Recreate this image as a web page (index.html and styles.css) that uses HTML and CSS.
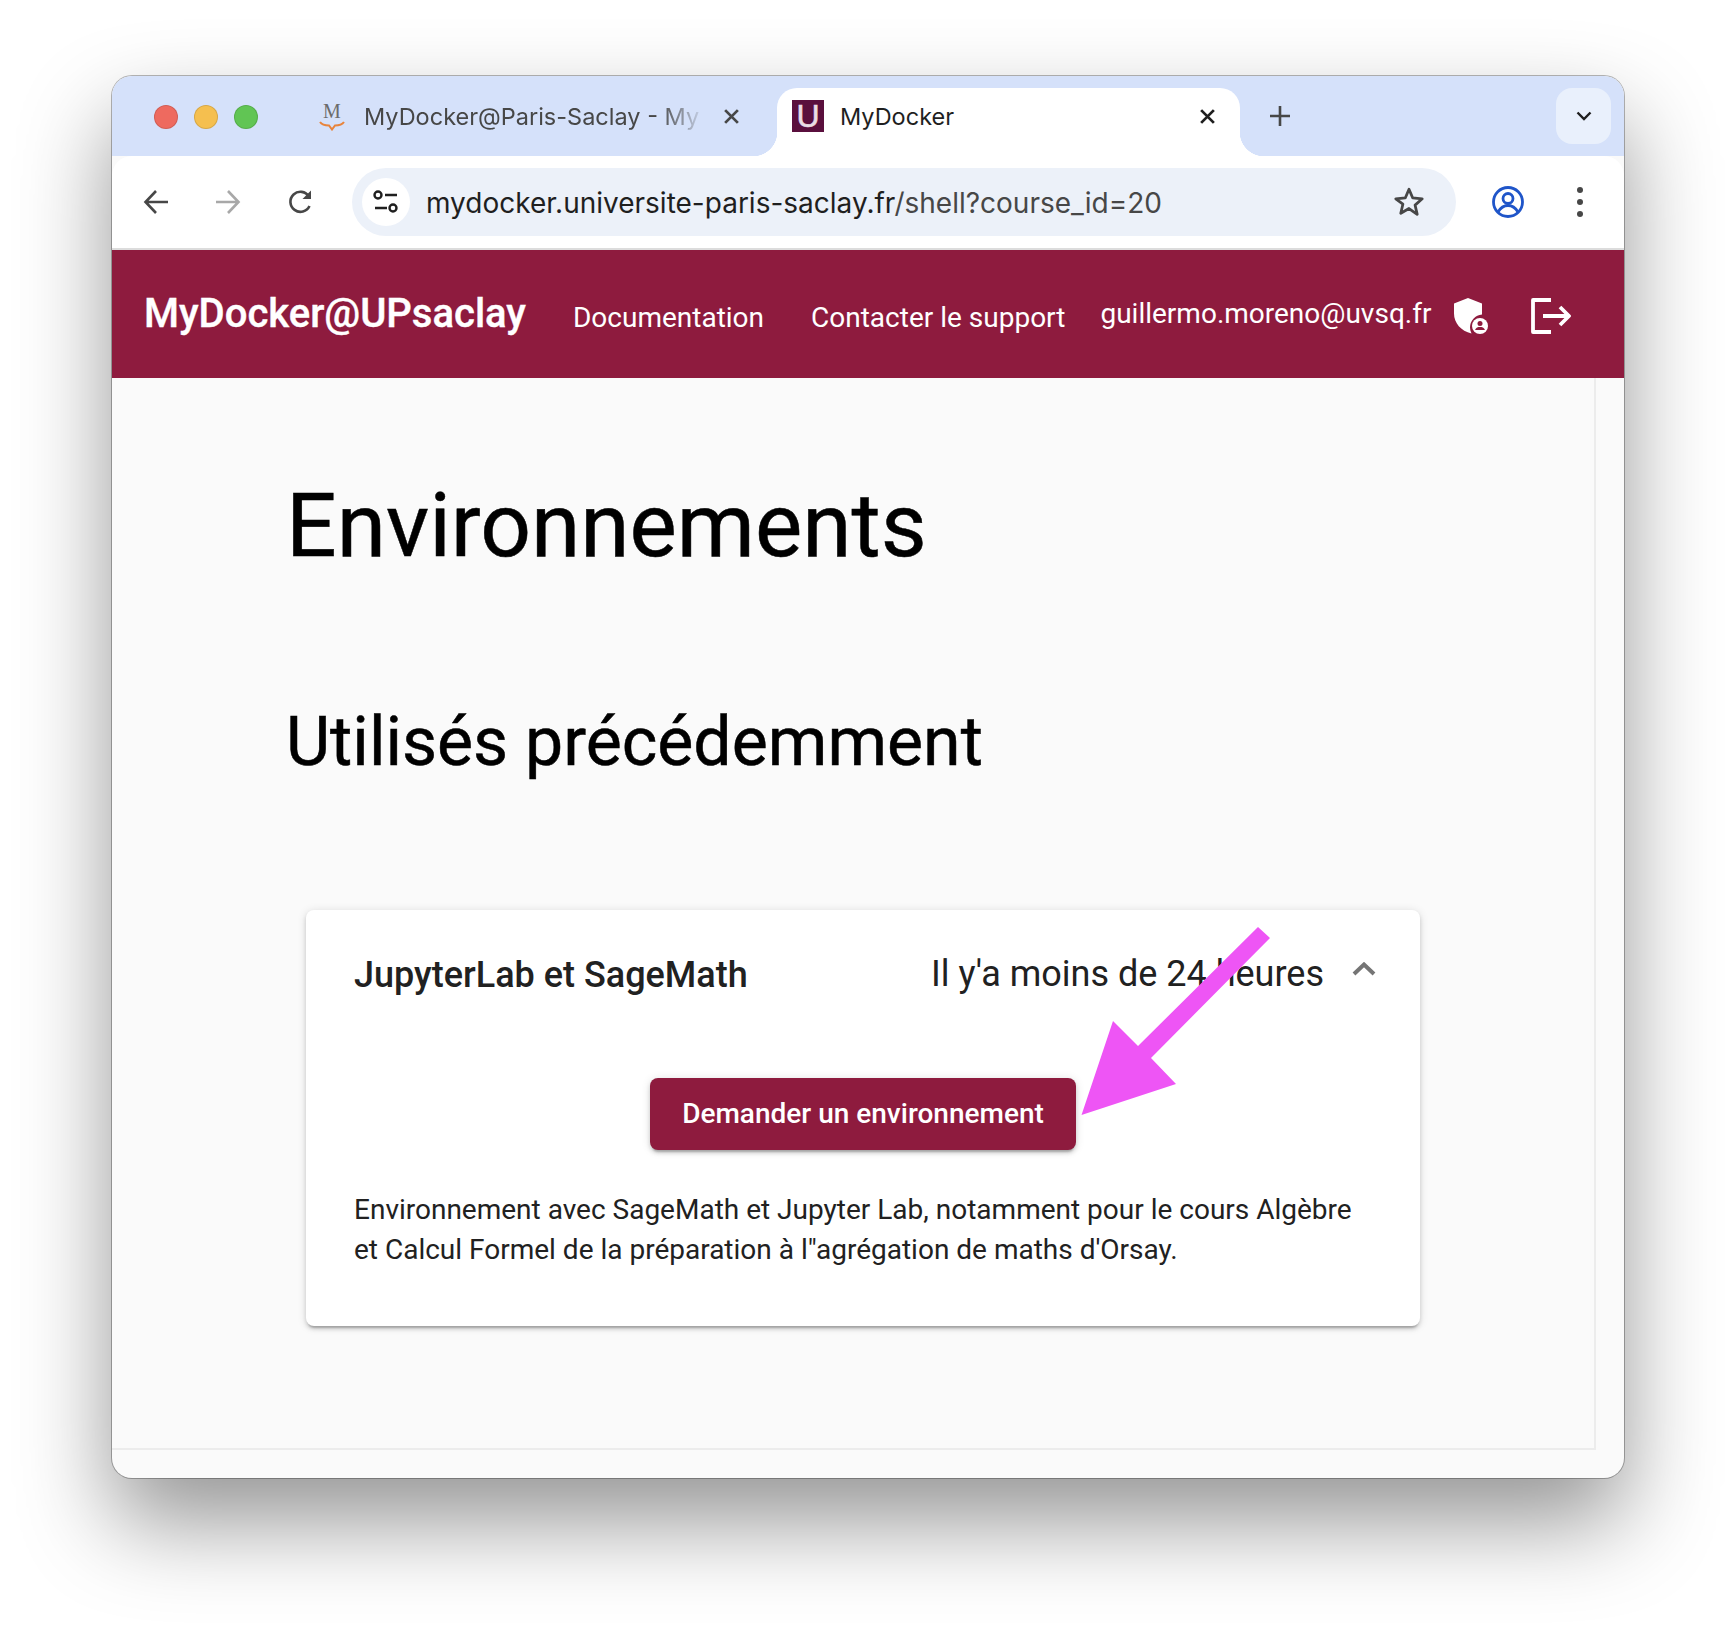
FILE: index.html
```html
<!DOCTYPE html>
<html lang="fr">

<head>
    <meta charset="UTF-8">
    <meta name="viewport" content="width=device-width, initial-scale=1.0">
    <title>MyDocker</title>
    <link rel="stylesheet" href="styles.css">
</head>

<body>

    <div class="window">
        <!-- Tab strip -->
        <div class="tabstrip">
            <div class="traffic">
                <span class="light light-red"></span>
                <span class="light light-yellow"></span>
                <span class="light light-green"></span>
            </div>
            <div class="tab">
                <span class="favicon-moodle">M
                    <svg class="moodle-hat" viewBox="0 0 26 10"><path d="M1 1c2 3 5 3.500 9 3.500l3 4 3-4c4 0 7-.5 9-3.500" fill="none" stroke="#e8843c" stroke-width="2"/></svg>
                </span>
                <span class="tab-title tab-title-fade">MyDocker@Paris-Saclay - My</span>
                <svg class="tab-close" viewBox="0 0 16 16"><path d="M2 2l12 12M14 2L2 14" stroke="#474747" stroke-width="2.600"/></svg>
            </div>
            <div class="tab tab-active">
                <span class="favicon-u">U</span>
                <span class="tab-title">MyDocker</span>
                <svg class="tab-close" viewBox="0 0 16 16"><path d="M2 2l12 12M14 2L2 14" stroke="#1f1f1f" stroke-width="2.600"/></svg>
            </div>
            <svg class="new-tab" viewBox="0 0 20 20"><path d="M10 0v20M0 10h20" stroke="#474747" stroke-width="2.600"/></svg>
            <div class="tab-search">
                <svg viewBox="0 0 16 10" width="16" height="10"><path d="M1.500 1.500L8 8l6.500-6.500" fill="none" stroke="#1f1f1f" stroke-width="2.400"/></svg>
            </div>
        </div>

        <!-- Toolbar -->
        <div class="toolbar">
            <button class="tool-btn">
                <svg viewBox="0 0 26 26" width="26" height="26"><path d="M25 13H3M13 2L2.500 13 13 24" fill="none" stroke="#474747" stroke-width="2.600"/></svg>
            </button>
            <button class="tool-btn">
                <svg viewBox="0 0 26 26" width="26" height="26"><path d="M1 13h22M13 2l10.500 11L13 24" fill="none" stroke="#a8a8a8" stroke-width="2.600"/></svg>
            </button>
            <button class="tool-btn">
                <svg viewBox="-1 0 26 26" width="26" height="26"><path d="M21.500 17a10 10 0 1 1-.6-9.500" fill="none" stroke="#474747" stroke-width="2.600"/><path d="M23 1.500v8.500h-8.500z" fill="#474747"/></svg>
            </button>
            <div class="omnibox">
                <span class="site-info">
                    <svg viewBox="0 0 26 24" width="26" height="24"><g fill="none" stroke="#1f1f1f" stroke-width="2.400"><circle cx="5" cy="5" r="3.500"/><path d="M12 5h12M2 18h12"/><circle cx="20" cy="18" r="3.500"/></g></svg>
                </span>
                <span class="url">mydocker.universite-paris-saclay.fr<span class="url-path">/shell?course_id=20</span></span>
                <svg class="star" viewBox="0 0 30 30" width="32" height="32"><path d="M15 3l3.500 8.200 8.900.8-6.700 5.900 2 8.700L15 21.100l-7.700 4.500 2-8.700L2.600 12l8.900-.8z" fill="none" stroke="#474747" stroke-width="2.600" stroke-linejoin="round"/></svg>
            </div>
            <button class="tool-btn tool-btn-first">
                <svg viewBox="0 0 34 34" width="34" height="34"><g fill="none" stroke="#1f55c9" stroke-width="2.800"><circle cx="17" cy="17" r="14.500"/><circle cx="17" cy="13.500" r="5"/><path d="M7 27c3-5 6.500-6.500 10-6.500s7 1.500 10 6.500"/></g></svg>
            </button>
            <button class="tool-btn">
                <svg viewBox="0 0 6 30" width="6" height="30"><g fill="#474747"><circle cx="3" cy="3" r="3"/><circle cx="3" cy="15" r="3"/><circle cx="3" cy="27" r="3"/></g></svg>
            </button>
        </div>

        <!-- App header -->
        <header class="app-bar">
            <div class="brand">MyDocker@UPsaclay</div>
            <a class="nav-link">Documentation</a>
            <a class="nav-link">Contacter le support</a>
            <span class="user-mail">guillermo.moreno@uvsq.fr</span>
            <svg class="shield" viewBox="0 0 36 38" width="36" height="38"><path d="M15 1L29 6.500v11a13 13 0 0 0-12 13c0 2 .5 4 1.500 6C8 34 1 26 1 16.500V6.500z" fill="#fff"/><circle cx="27" cy="29" r="8" fill="#fff"/><circle cx="27" cy="26.500" r="2.500" fill="#8e1b3e"/><path d="M22 33c1-2.500 3-3 5-3s4 .5 5 3z" fill="#8e1b3e"/></svg>
            <svg class="logout" viewBox="0 0 40 36" width="40" height="36"><path d="M20 2H2v32h18M12 18h24M29 9l9 9-9 9" fill="none" stroke="#fff" stroke-width="3.800" stroke-linejoin="round"/></svg>
        </header>

        <!-- Page content -->
        <main class="content">
            <h1 class="page-title">Environnements</h1>
            <h2 class="section-title">Utilisés précédemment</h2>

            <div class="card">
                <div class="card-head">
                    <span class="card-name">JupyterLab et SageMath</span>
                    <span class="card-date">Il y'a moins de 24 heures</span>
                    <svg class="chevron" viewBox="0 0 24 14" width="24" height="14"><path d="M2 12L12 2.500 22 12" fill="none" stroke="#757575" stroke-width="4"/></svg>
                </div>
                <div class="card-action">
                    <button class="btn">Demander un environnement</button>
                </div>
                <p class="card-text">Environnement avec SageMath et Jupyter Lab, notamment pour le cours Algèbre et Calcul Formel de la préparation à l"agrégation de maths d'Orsay.</p>
            </div>
        </main>
        <div class="bottom-gap"></div>

        <!-- Annotation over the screenshot -->
        <svg class="arrow" viewBox="0 0 200 200" width="200" height="200"><polygon points="177,7 189,18 70,138 95,164 0.500,195 32,101 57,126" fill="#ee55f5"/></svg>
    </div>

</body>

</html>
```

FILE: styles.css
```css
/* Global Styles */
* {
    box-sizing: border-box;
}

body {
    margin: 0;
    padding: 76px 112px 148px;
    background-color: #fff;
    font-family: Roboto, Arial, sans-serif;
}

.window {
    position: relative;
    display: flex;
    flex-direction: column;
    width: 1512px;
    height: 1402px;
    border-radius: 20px;
    background-color: #fafafa;
    box-shadow: 0 0 0 1px rgba(0, 0, 0, 0.28), 0 44px 92px rgba(0, 0, 0, 0.42);
}

/* Tab strip */
.tabstrip {
    display: flex;
    align-items: flex-start;
    height: 80px;
    padding-top: 12px;
    border-radius: 20px 20px 0 0;
    background-color: #d5e1fa;
}

.traffic {
    display: flex;
    gap: 16px;
    padding: 17px 0 0 42px;
}

.light {
    width: 24px;
    height: 24px;
    border-radius: 50%;
    border: 1px solid rgba(0, 0, 0, 0.12);
}

.light-red {
    background-color: #ee6a5f;
}

.light-yellow {
    background-color: #f5bf4f;
}

.light-green {
    background-color: #61c554;
}

.tab {
    position: relative;
    display: flex;
    align-items: center;
    width: 519px;
    height: 56px;
    padding-left: 60px;
    font-family: Inter, Arial, sans-serif;
    font-size: 23.500px;
    color: #474747;
}

.favicon-moodle {
    position: relative;
    width: 28px;
    height: 32px;
    flex: none;
    font-family: "Liberation Serif", serif;
    font-size: 20px;
    line-height: 22px;
    text-align: center;
    color: #6b6b6b;
}

.moodle-hat {
    position: absolute;
    left: 1px;
    top: 21px;
    width: 26px;
    height: 10px;
}

.tab-title {
    flex: none;
    margin-left: 18px;
    white-space: nowrap;
}

.tab-title-fade {
    -webkit-mask-image: linear-gradient(to right, #000 88%, rgba(0, 0, 0, 0.15));
    mask-image: linear-gradient(to right, #000 88%, rgba(0, 0, 0, 0.15));
}

.tab-close {
    flex: none;
    width: 17px;
    height: 17px;
    margin-left: auto;
    margin-right: 37px;
}

.tab-active {
    width: 463px;
    height: 68px;
    padding: 0 24px 12px 15px;
    border-radius: 20px 20px 0 0;
    background-color: #fff;
    color: #1f1f1f;
}

.tab-active .tab-close {
    margin-right: 0;
}

.tab-active::before,
.tab-active::after {
    content: "";
    position: absolute;
    bottom: 0;
    width: 24px;
    height: 24px;
}

.tab-active::before {
    left: -24px;
    background: radial-gradient(circle at 0 0, transparent 24px, #fff 24.500px);
}

.tab-active::after {
    right: -24px;
    background: radial-gradient(circle at 100% 0, transparent 24px, #fff 24.500px);
}

.favicon-u {
    width: 32px;
    height: 32px;
    flex: none;
    background-color: #5a0f3d;
    font-family: "Liberation Sans", Arial, sans-serif;
    font-size: 32px;
    line-height: 32px;
    text-align: center;
    color: #eadde5;
    -webkit-text-stroke: 0.6px #eadde5;
}

.tab-active .tab-title {
    margin-left: 16px;
}

.new-tab {
    flex: none;
    width: 20px;
    height: 20px;
    margin: 18px 0 0 30px;
}

.tab-search {
    display: flex;
    align-items: center;
    justify-content: center;
    width: 55px;
    height: 56px;
    margin-left: auto;
    margin-right: 13px;
    border-radius: 16px;
    background-color: #e9f0fc;
}

/* Toolbar */
.toolbar {
    display: flex;
    align-items: flex-start;
    height: 94px;
    padding: 12px 0 0 8px;
    border-bottom: 2px solid #dcdcdc;
    border-radius: 20px 20px 0 0;
    background-color: #fff;
}

.tool-btn {
    display: flex;
    align-items: center;
    justify-content: center;
    width: 72px;
    height: 68px;
    padding: 0;
    border: none;
    background: none;
}

.tool-btn-first {
    margin-left: 16px;
}

.omnibox {
    display: flex;
    align-items: center;
    width: 1104px;
    height: 68px;
    margin-left: 16px;
    padding: 0 31px 0 10px;
    border-radius: 34px;
    background-color: #ecf1f9;
}

.site-info {
    display: flex;
    align-items: center;
    justify-content: center;
    width: 48px;
    height: 48px;
    flex: none;
    border-radius: 50%;
    background-color: #fff;
}

.url {
    flex: 1;
    margin-left: 16px;
    padding-top: 1px;
    font-family: Inter, Arial, sans-serif;
    font-size: 28px;
    white-space: nowrap;
    color: #1f1f1f;
}

.url-path {
    color: #474747;
}

/* App header */
.app-bar {
    display: flex;
    align-items: center;
    height: 128px;
    padding-left: 32px;
    background-color: #8e1b3e;
    color: #fff;
}

.brand {
    margin-right: 47px;
    font-size: 40px;
    font-weight: 500;
    margin-top: -2px;
    -webkit-text-stroke: 0.4px #fff;
}

.nav-link {
    margin-right: 47px;
    padding-top: 6px;
    font-size: 28px;
}

.nav-link + .nav-link {
    margin-right: 35px;
}

.user-mail {
    font-size: 28px;
    margin-top: -2px;
}

.shield {
    margin: 4px 0 0 22px;
}

.logout {
    margin: 4px 0 0 42px;
}

/* Content */
.content {
    flex: 1;
    width: 1484px;
    padding: 0 174px 0 194px;
    border-right: 2px solid #ececec;
    border-bottom: 2px solid #ececec;
}

.page-title {
    margin: 88px 0 0 -20px;
    font-size: 89.200px;
    font-weight: 400;
    line-height: 120px;
    color: #000;
    -webkit-text-stroke: 0.5px #000;
}

.section-title {
    margin: 112px 0 0 -20px;
    font-size: 68px;
    font-weight: 400;
    line-height: 88px;
    color: #000;
    -webkit-text-stroke: 0.5px #000;
}

.card {
    margin-top: 124px;
    padding: 39px 48px 0;
    height: 416px;
    border-radius: 8px;
    background-color: #fff;
    box-shadow: 0 4px 2px -2px rgba(0, 0, 0, 0.2), 0 3px 4px rgba(0, 0, 0, 0.14), 0 1px 10px rgba(0, 0, 0, 0.12);
}

.card-head {
    display: flex;
    align-items: center;
    height: 52px;
    margin-right: -4px;
    color: #212121;
}

.card-name {
    flex: 1;
    font-size: 36px;
    font-weight: 500;
}

.card-date {
    margin-top: -2px;
    font-size: 36px;
}

.chevron {
    margin: -12px 0 0 28px;
}

.card-action {
    display: flex;
    justify-content: center;
    margin-top: 77px;
}

.btn {
    width: 426px;
    height: 72px;
    padding-bottom: 3px;
    border: none;
    border-radius: 8px;
    background-color: #8e1b3e;
    box-shadow: 0 4px 2px -2px rgba(0, 0, 0, 0.2), 0 3px 4px rgba(0, 0, 0, 0.14), 0 1px 10px rgba(0, 0, 0, 0.12);
    font-family: inherit;
    font-size: 28px;
    font-weight: 500;
    color: #fff;
}

.card-text {
    margin: 40px 0 0;
    font-size: 28px;
    line-height: 40px;
    color: #212121;
}

.bottom-gap {
    height: 28px;
}

.arrow {
    position: absolute;
    left: 969px;
    top: 844px;
}
```
